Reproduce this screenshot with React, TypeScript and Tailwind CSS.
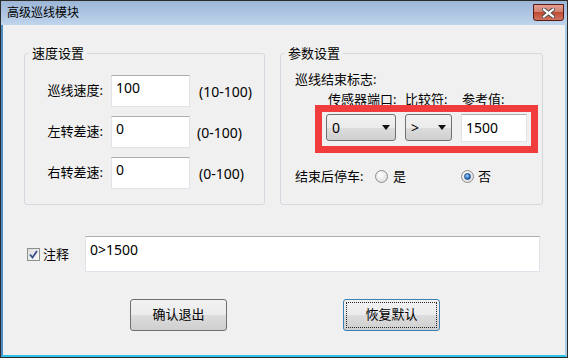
import React from 'react';

function Edit({ value, className }: { value: string; className: string }) {
  return (
    <div
      className={`border border-[#e2e3ea] border-t-[#abadb3] bg-white px-[4px] text-[14px] leading-[18px] text-black ${className}`}
    >
      {value}
    </div>
  );
}

function Combo({ value, className }: { value: string; className: string }) {
  return (
    <div
      className={`flex h-[27px] items-center justify-between rounded-[3px] border border-[#707070] bg-[linear-gradient(#f2f2f2,#ebebeb_50%,#dddddd_50%,#cfcfcf)] pl-[5px] pr-[5px] text-[14px] ${className}`}
    >
      <span className="text-black">{value}</span>
      <svg width="8" height="5" viewBox="0 0 8 5">
        <path d="M0 0h8L4 5z" fill="#111" />
      </svg>
    </div>
  );
}

function Radio({ checked }: { checked?: boolean }) {
  return (
    <div className="flex h-[13px] w-[13px] items-center justify-center rounded-full border border-[#8e8f8f] bg-[radial-gradient(circle_at_40%_35%,#ffffff,#d4d4d4)]">
      {checked && (
        <div className="h-[7px] w-[7px] rounded-full border border-[#1b4a86] bg-[radial-gradient(circle_at_40%_35%,#a8d4ff,#2c74c9_60%,#164c95)]" />
      )}
    </div>
  );
}

function Button({ label, focused }: { label: string; focused?: boolean }) {
  return (
    <div
      className={`flex h-[32px] w-[97px] items-center justify-center rounded-[3px] border bg-[linear-gradient(#f2f2f2,#ebebeb_50%,#dddddd_50%,#cfcfcf)] p-[2px] ${
        focused ? 'border-[#3c7fb1]' : 'border-[#707070]'
      }`}
    >
      <div
        className={`flex h-full w-full items-center justify-center border border-dotted ${
          focused ? 'border-[#222]' : 'border-transparent'
        }`}
      >
        {label}
      </div>
    </div>
  );
}

export default function App() {
  return (
    <div className="flex h-[358px] w-[568px] flex-col border border-[#2b2b2b] bg-[#f0f0f0] font-['Noto_Sans','Noto_Sans_CJK_SC',sans-serif] text-[13px] text-black">
      {/* title bar */}
      <div className="flex h-[24px] shrink-0 items-start justify-between bg-gradient-to-b from-[#9cb6d7] to-[#bfd4ec] pl-[6px] pr-[3px]">
        <span className="mt-[5px] text-[12px] leading-[14px] text-black">高级巡线模块</span>
        <div className="mt-[3px] flex h-[17px] w-[31px] items-center justify-center rounded-b-[3px] border border-[#5a1a14] bg-[linear-gradient(#e4a093,#d0806f_45%,#c04a33_50%,#cf7561)]">
          <svg width="13" height="10" viewBox="0 0 13 10">
            <path
              d="M2 1.5l4.5 3.5L11 1.5M2 8.5l4.5-3.5L11 8.5"
              stroke="#4a4a4a"
              strokeWidth="4"
              fill="none"
              strokeLinecap="square"
            />
            <path
              d="M2 1.5l4.5 3.5L11 1.5M2 8.5l4.5-3.5L11 8.5"
              stroke="#fff"
              strokeWidth="2.2"
              fill="none"
              strokeLinecap="square"
            />
          </svg>
        </div>
      </div>

      {/* body */}
      <div className="flex flex-1 flex-col border-b-2 border-l-2 border-r-2 border-b-[#2fc3ea] border-l-[#4b8fc6] border-r-[#a8cdea]">
        <div className="flex gap-[15px] pl-[21px] pt-[21px]">
          {/* speed settings */}
          <fieldset className="h-[159px] w-[241px] rounded-[3px] border border-[#d3d9df]">
            <legend className="ml-[4px] px-[3px] leading-[14px]">速度设置</legend>
            <div className="flex flex-col gap-[9px] pl-[8px] pt-[15px]">
              <div className="flex items-center">
                <span className="w-[70px] text-right">巡线速度:</span>
                <Edit value="100" className="ml-[8px] h-[32px] w-[79px] pt-[3px]" />
                <span className="ml-[9px] text-[14px]">(10-100)</span>
              </div>
              <div className="flex items-center">
                <span className="w-[70px] text-right">左转差速:</span>
                <Edit value="0" className="ml-[8px] h-[32px] w-[79px] pt-[3px]" />
                <span className="ml-[7px] text-[14px]">(0-100)</span>
              </div>
              <div className="flex items-center">
                <span className="w-[70px] text-right">右转差速:</span>
                <Edit value="0" className="ml-[8px] h-[32px] w-[79px] pt-[3px]" />
                <span className="ml-[9px] text-[14px]">(0-100)</span>
              </div>
            </div>
          </fieldset>

          {/* parameter settings */}
          <fieldset className="h-[159px] w-[263px] rounded-[3px] border border-[#d3d9df]">
            <legend className="ml-[4px] px-[3px] leading-[14px]">参数设置</legend>
            <div className="flex flex-col pt-[11px]">
              <span className="pl-[14px] leading-[16px]">巡线结束标志:</span>
              <div className="mt-[5px] flex pl-[47px] leading-[14px]">
                <span className="w-[77px]">传感器端口:</span>
                <span className="w-[57px]">比较符:</span>
                <span>参考值:</span>
              </div>
              <div className="ml-[34px] mt-[-1px] flex h-[48px] w-[223px] items-start gap-[9px] border-[7px] border-[#f03c3c] pl-[4px] pt-[2px]">
                <Combo value="0" className="w-[70px]" />
                <Combo value=">" className="w-[47px]" />
                <Edit value="1500" className="flex h-[28px] w-[66px] items-center" />
              </div>
              <div className="mt-[15px] flex items-center pl-[14px] leading-[16px]">
                <span className="w-[80px]">结束后停车:</span>
                <div className="flex w-[86px] items-center gap-[5px]">
                  <Radio />
                  <span>是</span>
                </div>
                <div className="flex items-center gap-[4px]">
                  <Radio checked />
                  <span>否</span>
                </div>
              </div>
            </div>
          </fieldset>
        </div>

        {/* comment row */}
        <div className="ml-[24px] mt-[31px] flex items-center">
          <div className="flex h-[13px] w-[13px] items-center justify-center border border-[#8e8f8f] bg-gradient-to-br from-[#dcdcdc] to-[#fafafa]">
            <svg width="9" height="9" viewBox="0 0 9 9">
              <path d="M1 4.5l2.5 3L8 1" stroke="#3a4f8c" strokeWidth="1.8" fill="none" />
            </svg>
          </div>
          <span className="ml-[3px] leading-[16px]">注释</span>
          <Edit value="0>1500" className="ml-[16px] h-[36px] w-[455px] pt-[4px]" />
        </div>

        {/* buttons */}
        <div className="ml-[127px] mt-[27px] flex gap-[116px]">
          <Button label="确认退出" />
          <Button label="恢复默认" focused />
        </div>
      </div>
    </div>
  );
}
